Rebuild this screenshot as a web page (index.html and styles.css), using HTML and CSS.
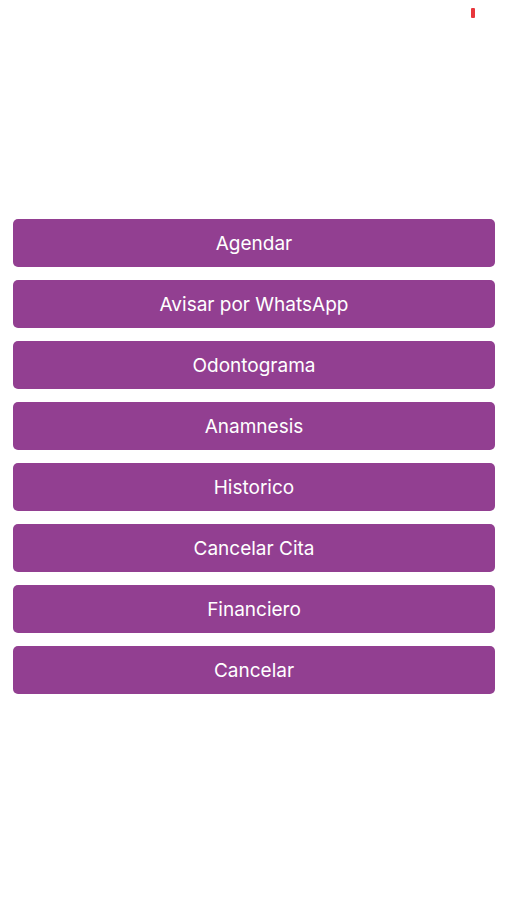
FILE: index.html
```html
<!DOCTYPE html>
<html lang="es">
<head>
  <meta charset="UTF-8" />
  <title>Opciones</title>
  <link rel="stylesheet" href="styles.css">
</head>
<body>
  <div class="status">
    <span class="bateria"></span>
  </div>

  <div class="menu">
    <button class="opcion">Agendar</button>
    <button class="opcion">Avisar por WhatsApp</button>
    <button class="opcion">Odontograma</button>
    <button class="opcion">Anamnesis</button>
    <button class="opcion">Historico</button>
    <button class="opcion">Cancelar Cita</button>
    <button class="opcion">Financiero</button>
    <button class="opcion">Cancelar</button>
  </div>
</body>
</html>
```

FILE: styles.css
```css
body {
  margin: 0;
  font-family: Inter, "Noto Sans", sans-serif;
  background-color: #fff;
}

.status {
  height: 219px;
  display: flex;
  justify-content: flex-end;
  align-items: flex-start;
  padding-right: 32px;
  box-sizing: border-box;
}

.bateria {
  display: block;
  width: 4px;
  height: 10px;
  margin-top: 8px;
  background-color: #e8373c;
  border-radius: 1px;
}

.menu {
  display: flex;
  flex-direction: column;
  gap: 13px;
  padding: 0 12px 0 13px;
}

.opcion {
  height: 48px;
  font-family: inherit;
  font-size: 19px;
  color: #fff;
  background-color: #923f91;
  border: none;
  border-radius: 5px;
  cursor: pointer;
}
```
